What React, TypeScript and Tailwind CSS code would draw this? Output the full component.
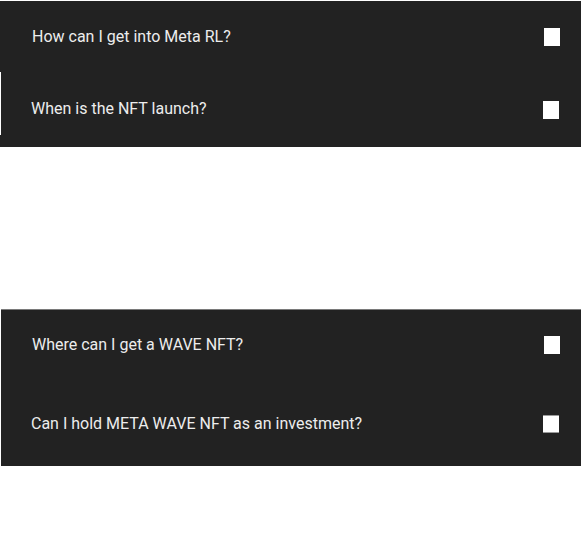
import React from "react";

const font = { fontFamily: "Roboto, 'Noto Sans', sans-serif" };

function Square({ edge = false }: { edge?: boolean }) {
  return (
    <div
      className={
        edge
          ? "w-4 h-[18px] bg-white border-y border-[#9a9a9a] shrink-0"
          : "w-4 h-[18px] bg-white shrink-0"
      }
    />
  );
}

export default function App() {
  return (
    <div className="w-[581px] h-[545px] bg-white pt-px" style={font}>
      <div className="flex flex-col">
        <div className="h-[71px] bg-[#222222] flex items-center justify-between pl-8 pr-[21px]">
          <span className="text-[16px] leading-6 text-[#ededed]">How can I get into Meta RL?</span>
          <Square />
        </div>
        <div className="relative h-[75px] bg-[#222222] flex items-center justify-between pl-[31px] pr-[22px]">
          <div className="absolute left-0 top-0 w-px h-[63px] bg-white" />
          <span className="text-[16px] leading-6 text-[#ededed] -mt-px">When is the NFT launch?</span>
          <Square />
        </div>
      </div>
      <div className="mt-[162px] ml-px flex flex-col border-t border-[#7a7a7a] bg-[#222222]">
        <div className="h-[70px] flex items-center justify-between pl-[31px] pr-[21px]">
          <span className="text-[16px] leading-6 text-[#ededed]">Where can I get a WAVE NFT?</span>
          <Square />
        </div>
        <div className="h-[86px] pt-[2px] flex items-center justify-between pl-[30px] pr-[22px]">
          <span className="text-[16px] leading-6 text-[#ededed]">Can I hold META WAVE NFT as an investment?</span>
          <Square edge />
        </div>
      </div>
    </div>
  );
}
